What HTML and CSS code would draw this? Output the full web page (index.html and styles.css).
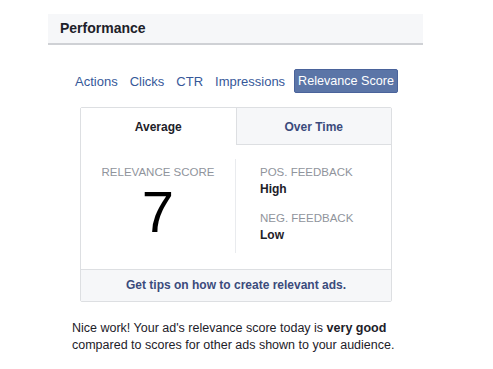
FILE: index.html
```html
<!DOCTYPE html>
<html>
<head>
<meta charset="utf-8">
<link rel="stylesheet" href="styles.css">
</head>
<body>
<div class="panel">
  <div class="header">Performance</div>
  <div class="body">
    <div class="tabs">
      <span class="tab">Actions</span>
      <span class="tab">Clicks</span>
      <span class="tab">CTR</span>
      <span class="tab">Impressions</span>
      <span class="tab active">Relevance Score</span>
    </div>
    <div class="card">
      <div class="cardtabs">
        <div class="ct selected">Average</div>
        <div class="ct other">Over Time</div>
      </div>
      <div class="content">
        <div class="score">
          <div class="label">RELEVANCE SCORE</div>
          <div class="num">7</div>
        </div>
        <div class="feedback">
          <div class="label">POS. FEEDBACK</div>
          <div class="val">High</div>
          <div class="label second">NEG. FEEDBACK</div>
          <div class="val">Low</div>
        </div>
      </div>
      <div class="footer">Get tips on how to create relevant ads.</div>
    </div>
    <p class="note">Nice work! Your ad's relevance score today is <b>very good</b> compared to scores for other ads shown to your audience.</p>
  </div>
</div>
</body>
</html>
```
FILE: styles.css
```css
html, body {
  margin: 0;
  padding: 0;
  background: #fff;
}
body {
  font-family: "Liberation Sans", Arial, sans-serif;
  color: #1d2129;
}
.panel {
  margin-left: 48px;
  margin-top: 14px;
  width: 375px;
}
.header {
  background: #f6f7f9;
  border-bottom: 2px solid #cfd1d5;
  height: 29px;
  padding-left: 12px;
  font-weight: bold;
  font-size: 14px;
  line-height: 28px;
}
.body {
  padding-left: 27px;
  padding-top: 24px;
}
.tabs {
  display: flex;
  align-items: center;
  font-size: 13px;
  height: 24px;
}
.tab {
  margin-right: 12px;
  color: #365899;
}
.tab.active {
  background: #5b75a7;
  color: #fff;
  border: 1px solid #4a639b;
  border-radius: 2px;
  padding: 0 3px;
  line-height: 22px;
  margin-left: -3px;
  font-size: 12.6px;
}
.card {
  margin-top: 14px;
  margin-left: 5px;
  width: 310px;
  border: 1px solid #dddfe2;
  border-radius: 2px;
}
.cardtabs {
  display: flex;
  height: 37px;
}
.ct {
  flex: 1;
  text-align: center;
  font-weight: bold;
  font-size: 12px;
  line-height: 38px;
}
.ct.selected {
  background: #fff;
  color: #1d2129;
}
.ct.other {
  background: #f6f7f9;
  border-left: 1px solid #dddfe2;
  border-bottom: 1px solid #dddfe2;
  color: #3b4b7c;
}
.content {
  display: flex;
  padding: 14px 0 16px;
}
.score {
  width: 154px;
  border-right: 1px solid #e9ebee;
  text-align: center;
  padding-top: 6px;
}
.label {
  font-size: 11.5px;
  color: #90949c;
  line-height: 14px;
}
.num {
  font-size: 58px;
  line-height: 58px;
  color: #000;
  margin-top: 4px;
}
.feedback {
  padding-left: 24px;
  padding-top: 6px;
  padding-bottom: 8px;
}
.val {
  font-weight: bold;
  font-size: 12px;
  line-height: 20px;
}
.label.second {
  margin-top: 12px;
}
.footer {
  background: #f6f7f9;
  border-top: 1px solid #dddfe2;
  text-align: center;
  font-weight: bold;
  font-size: 12px;
  color: #3b4b7c;
  height: 31px;
  line-height: 30px;
}
.note {
  margin: 18px 0 0 -3px;
  font-size: 12.5px;
  line-height: 17px;
  color: #1d2129;
}
```
